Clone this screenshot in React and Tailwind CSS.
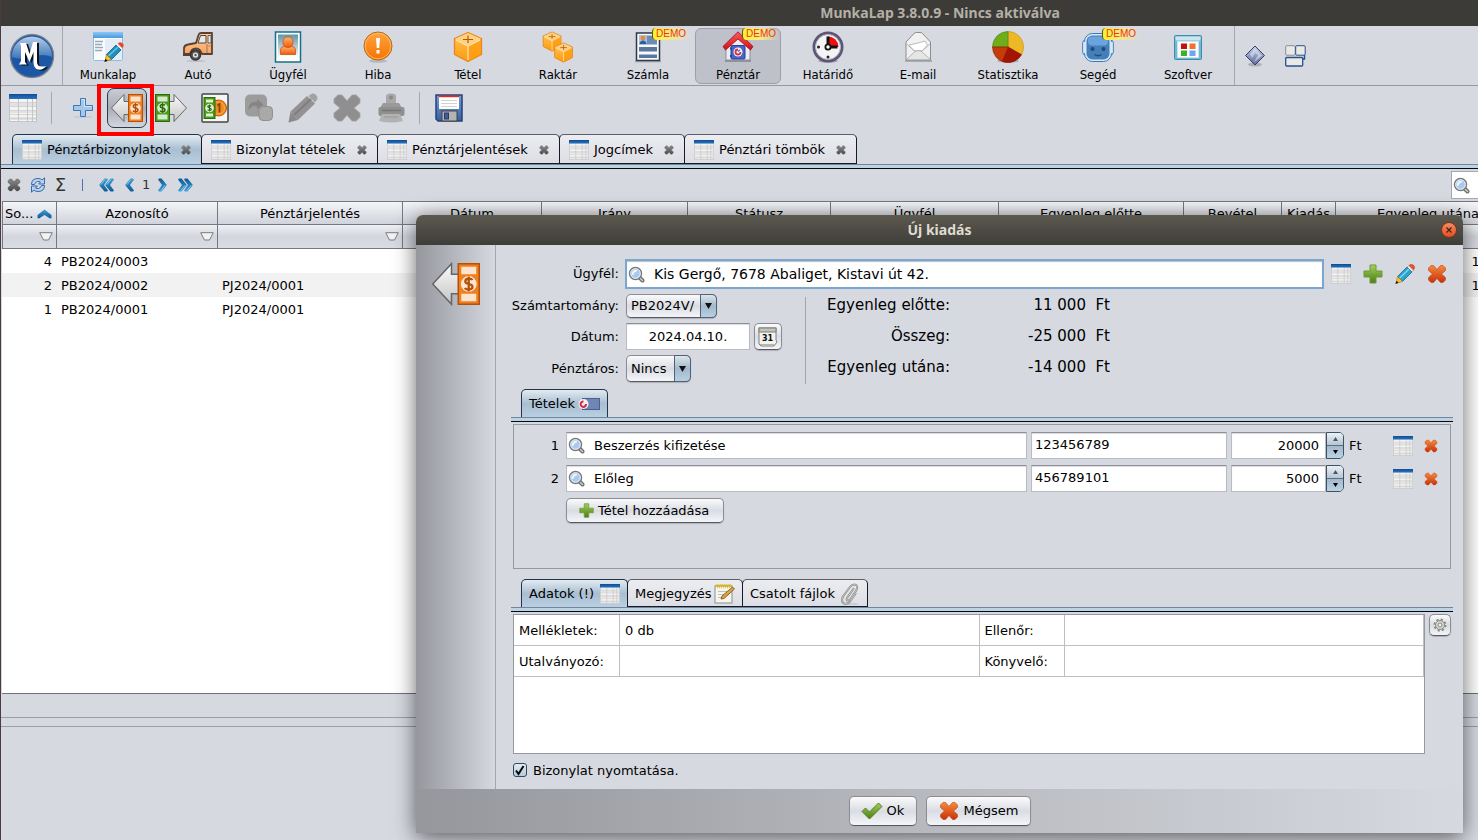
import { useState } from 'react';

// Shared gradients, referenced by id from the icons below
function Gradients() {
  const list = [
    ['gBlue', '#3f9fd8', '#0e5a94'],
    ['gHead', '#0f4d95', '#2a74c0'],
    ['gOrange', '#f58a3c', '#c8310a'],
    ['gGreen', '#a3cf5d', '#4a7d12'],
    ['gGrey', '#8a8a8a', '#4c4c4c'],
    ['gArrow', '#fbfbfb', '#c4c4c4'],
    ['gBox', '#ffc65a', '#ff9a0c'],
    ['gAlert', '#ffa640', '#f57200'],
    ['gLogo', '#b4cbe6', '#3d76ba'],
    ['gSky', '#5d97ad', '#e8f3f6'],
    ['gPerson', '#ffb36b', '#ee5a10'],
    ['gRoof', '#ff5a5a', '#d0101c'],
    ['gDisk', '#6fa0d8', '#3b5f9c'],
    ['gCar', '#ffcf9b', '#f3a263'],
    ['gWin', '#8cc8f4', '#4a98e0'],
    ['gGem', '#c3cde6', '#5d6c9c'],
  ];
  return (
    <svg width="0" height="0" className="absolute" aria-hidden="true">
      <defs>
        {list.map(([id, a, b]) => (
          <linearGradient key={id} id={id} x1="0" y1="0" x2="0" y2="1">
            <stop offset="0" stopColor={a} />
            <stop offset="1" stopColor={b} />
          </linearGradient>
        ))}
      </defs>
    </svg>
  );
}

/* ---------- small icons ---------- */

function TableIcon({ size = 20 }) {
  return (
    <svg width={size} height={size} viewBox="0 0 28 28" className="shrink-0">
      <rect x="0.5" y="0.5" width="27" height="27" fill="#f4f4f4" stroke="#c4c4c4" />
      <rect x="1" y="9" width="26" height="3" fill="#e2e2e2" />
      <rect x="1" y="16" width="26" height="3" fill="#e2e2e2" />
      <rect x="1" y="23" width="26" height="3" fill="#e2e2e2" />
      <path d="M1 8.500H27M1 12.500H27M1 16.500H27M1 20.500H27M1 24.500H27" stroke="#d4d4d4" />
      <path d="M9.500 5V27M18.500 5V27M23.500 5V27" stroke="#c6c6c6" />
      <rect width="28" height="5" fill="url(#gHead)" />
    </svg>
  );
}

function CrossIcon({ size = 20, fill = 'url(#gOrange)', stroke = '#c2410c' }) {
  return (
    <svg width={size} height={size} viewBox="0 0 20 20" className="shrink-0">
      <path
        d="M4 1.500H6.500L10 5.500L13.500 1.500H16L18.500 4V6.500L14.500 10L18.500 13.500V16L16 18.500H13.500L10 14.500L6.500 18.500H4L1.500 16V13.500L5.500 10L1.500 6.500V4Z"
        fill={fill} stroke={stroke} strokeLinejoin="round" strokeOpacity="0.6"
      />
    </svg>
  );
}

function PlusIcon({ size = 20 }) {
  return (
    <svg width={size} height={size} viewBox="0 0 20 20" className="shrink-0">
      <path d="M7 1H13V7H19V13H13V19H7V13H1V7H7Z" fill="url(#gGreen)" stroke="#6c9a35" />
    </svg>
  );
}

function BluePlusIcon() {
  return (
    <svg width="20" height="22" viewBox="0 0 20 22">
      <path d="M1 20H19" stroke="#cacdd5" strokeWidth="2" />
      <path d="M7.500 1.500H12.500V8.500H19.500V13.500H12.500V19.500H7.500V13.500H0.500V8.500H7.500Z" fill="#a4c8ea" stroke="#3f76b5" />
      <path d="M8.500 2.500H11.500V9.500H18.500" fill="none" stroke="#d6e8f8" />
    </svg>
  );
}

function PencilIcon({ size = 20 }) {
  return (
    <svg width={size} height={size} viewBox="0 0 20 20" className="shrink-0">
      <path d="M13.500 2L15.500 0.300Q19.500 0.300 19.700 4L18 6.500Z" fill="#e4572e" stroke="#b53c1a" strokeWidth="0.500" />
      <path d="M12 3.300L13.800 1.800L18.300 6.300L16.700 8Z" fill="#efefef" stroke="#999" strokeWidth="0.500" />
      <path d="M2.500 12.500L12 3L17 8L7.500 17.500Z" fill="#29a3cc" stroke="#14607e" strokeWidth="0.700" />
      <path d="M4.800 14L14 5" stroke="#7fd4ee" strokeWidth="1.500" />
      <path d="M2.500 12.500L7.500 17.500L1 19.500Z" fill="#fbc02d" stroke="#a06a00" strokeWidth="0.500" />
      <path d="M0.300 20L1.500 16.800L3.700 18.700Z" fill="#222" />
    </svg>
  );
}

function SearchIcon() {
  return (
    <svg width="17" height="17" viewBox="0 0 17 17" className="shrink-0">
      <path d="M11.500 11.500L14.500 14.500" stroke="#6e6e6e" strokeWidth="4" strokeLinecap="round" />
      <path d="M12 12L14.500 14.500" stroke="#cfcfcf" strokeWidth="1.500" strokeLinecap="round" />
      <circle cx="7.500" cy="7.500" r="6" fill="#a9caee" stroke="#777" strokeWidth="1.500" />
      <circle cx="7.500" cy="7.500" r="4.800" fill="none" stroke="#eef1f4" />
      <path d="M4.800 8Q5 5 8 4.800" fill="none" stroke="#eef6fd" strokeWidth="2" strokeLinecap="round" />
    </svg>
  );
}

// Banknote with an arrow, orange = money out, green = money in
function CashIcon({ out = true, size = 32 }) {
  const note = out ? '#f07f1c' : '#4b9a1b';
  const dark = out ? '#b4500a' : '#2c6b0a';
  return (
    <svg width={size} height={size} viewBox="0 0 32 32" className="shrink-0">
      {out ? (
        <path d="M0.500 16L13 2.500V9.500H19V22.500H13V29.500Z" fill="url(#gArrow)" stroke="#666" />
      ) : (
        <path d="M31.500 16L19 2.500V9.500H13V22.500H19V29.500Z" fill="url(#gArrow)" stroke="#666" />
      )}
      <g transform={out ? 'translate(17 0)' : 'translate(0 0)'}>
        <rect x="0.500" y="2.500" width="14" height="27" fill={note} stroke={dark} />
        <rect x="2.500" y="4.500" width="10" height="5" fill="#fff" fillOpacity="0.780" />
        <rect x="2.500" y="22.500" width="10" height="5" fill="#fff" fillOpacity="0.780" />
        <circle cx="7.500" cy="16" r="5.300" fill="#fff" fillOpacity="0.800" />
        <path d="M10 13.300Q9.400 12.400 7.500 12.400Q5.200 12.400 5.200 14.200Q5.200 15.600 7.500 16Q10 16.400 10 17.900Q10 19.700 7.500 19.700Q5.500 19.700 5 18.600M7.500 11V21" fill="none" stroke={dark} strokeWidth="1.500" />
      </g>
    </svg>
  );
}

function CashReportIcon() {
  return (
    <svg width="28" height="30" viewBox="0 0 28 30">
      <rect x="1" y="1" width="26" height="28" rx="1" fill="#f5f5f5" stroke="#444" strokeWidth="1.500" />
      <circle cx="17.500" cy="15" r="8" fill="#f08a1c" stroke="#b95a06" />
      <circle cx="17.500" cy="15" r="6" fill="none" stroke="#f9b45e" strokeWidth="0.800" />
      <path d="M16.500 12.500L18.500 11V19.500" fill="none" stroke="#8a4304" strokeWidth="1.800" />
      <rect x="3" y="4.500" width="11" height="21" fill="#4b9a1b" stroke="#2c6b0a" />
      <rect x="5" y="6.500" width="7" height="3" fill="#e0f0d6" />
      <rect x="5" y="20.500" width="7" height="3" fill="#e0f0d6" />
      <circle cx="8.500" cy="15" r="4.300" fill="#e6f4dc" />
      <path d="M10.200 13.300Q8.500 12 7 13Q6.400 14.500 8.500 15Q11 15.600 10 17Q8.500 18 6.600 16.800M8.500 11.500V18.500" fill="none" stroke="#2c6b0a" strokeWidth="1.200" />
    </svg>
  );
}

function GreyCopyIcon() {
  return (
    <svg width="28" height="28" viewBox="0 0 28 28">
      <rect x="0" y="0.500" width="22" height="22" rx="5" fill="#9c9c9c" />
      <path d="M3.500 16V13Q6 6.500 12 8V5L18.500 10.500L12 15V12Q7 10.500 3.500 16Z" fill="#858585" />
      <rect x="14" y="12.500" width="13.500" height="14" rx="4" fill="#a9a9a9" stroke="#8f8f8f" />
    </svg>
  );
}

function GreyPencilIcon() {
  return (
    <svg width="30" height="30" viewBox="0 0 30 30">
      <path d="M20.500 3L24 0.500Q29.500 0.500 29.500 6L27 9.500Z" fill="#a2a2a2" />
      <path d="M2.500 18.500L19 3L27 10.500L10 27Z" fill="#929292" />
      <path d="M6 22L23 6" stroke="#7f7f7f" strokeWidth="2" />
      <path d="M2.500 18.500L10 27L0.500 29.500Z" fill="#8a8a8a" />
    </svg>
  );
}

function GreyPrinterIcon() {
  return (
    <svg width="27" height="30" viewBox="0 0 27 30">
      <path d="M8 12V3Q8 0.500 13 0.500Q18 0.500 18 3V12Z" fill="#a8a8a8" />
      <circle cx="13" cy="4.500" r="2" fill="#8a8a8a" />
      <path d="M5 10H21L24 15H2Z" fill="#9a9a9a" />
      <rect x="0.500" y="14" width="26" height="9" rx="2" fill="#8f8f8f" />
      <path d="M4 17.500H23" stroke="#777" strokeWidth="1.500" />
      <path d="M4 21H22L25 28Q13 31 1 28Z" fill="#b2b2b2" />
      <path d="M6 24H20" stroke="#999" />
    </svg>
  );
}

function FloppyIcon() {
  return (
    <svg width="28" height="28" viewBox="0 0 28 28">
      <path d="M1 1H27V27H3L1 25Z" fill="url(#gDisk)" stroke="#24427c" strokeWidth="1.500" />
      <rect x="4" y="2" width="20" height="13" fill="#fff" />
      <rect x="4" y="1.500" width="20" height="1.700" fill="#dd2a1b" />
      <path d="M6 6.500H22M6 9.500H22M6 12.500H22" stroke="#d2d2d2" />
      <rect x="7" y="17" width="15" height="10" fill="#b4b4b4" stroke="#444" />
      <rect x="9.500" y="19" width="4" height="6" fill="#3d5f9d" stroke="#2a3c60" />
    </svg>
  );
}

function Chevron({ double, flip }) {
  return (
    <svg width={double ? 15 : 10} height="14" viewBox={double ? '0 0 15 14' : '0 0 10 14'} className={flip ? 'rotate-180' : ''}>
      <path d="M5.500 0.500H8L9 1.500L5 7L9 12.500L8 13.500H5.500L0.500 7.500V6.500Z" fill="url(#gBlue)" />
      <path d="M6 1.500L1.800 6.800" fill="none" stroke="#8cc8ec" />
      {double && <path d="M11.500 0.500H14L15 1.500L11 7L15 12.500L14 13.500H11.500L6.500 7.500V6.500Z" fill="url(#gBlue)" />}
      {double && <path d="M12 1.500L7.800 6.800" fill="none" stroke="#8cc8ec" />}
    </svg>
  );
}

function RefreshIcon() {
  return (
    <svg width="16" height="16" viewBox="0 0 16 16">
      <path d="M1.500 7.500Q1.500 1.500 8 1.500Q10.500 1.500 12 3L14.500 0.800V7H8.500L10.500 5Q9 4 7.500 4.500Q5 5 4.500 7.500Z" fill="#b9d4ee" stroke="#3869ad" />
      <path d="M14.500 8.500Q14.500 14.500 8 14.500Q5.500 14.500 4 13L1.500 15.200V9H7.500L5.500 11Q7 12 8.500 11.500Q11 11 11.500 8.500Z" fill="#b9d4ee" stroke="#3869ad" />
    </svg>
  );
}

function FunnelIcon() {
  return (
    <svg width="14" height="9" viewBox="0 0 14 9">
      <path d="M0.700 0.700H13.300L9.500 8H4.500Z" fill="#f1f2f4" stroke="#7c7c7c" />
    </svg>
  );
}

/* ---------- main toolbar icons ---------- */

function WorksheetIcon() {
  return (
    <svg width="32" height="32" viewBox="0 0 32 32">
      <rect x="1.500" y="1.500" width="29" height="28" rx="1" fill="#f9fbfd" stroke="#8cbce8" />
      <rect x="1" y="1" width="30" height="6" fill="url(#gWin)" />
      <rect x="13" y="8" width="17" height="21" fill="#e3edf7" />
      <path d="M3 10.500H11M3 13.500H10M3 16.500H11M3 19.500H10" stroke="#9aa7b5" strokeWidth="1.500" />
      <g transform="translate(12 11)">
        <path d="M13.500 2L15.500 0.300Q19.500 0.300 19.700 4L18 6.500Z" fill="#e4472e" />
        <path d="M12 3.300L13.800 1.800L18.300 6.300L16.700 8Z" fill="#efefef" />
        <path d="M2.500 12.500L12 3L17 8L7.500 17.500Z" fill="#1f8fbd" stroke="#0f506c" strokeWidth="0.700" />
        <path d="M4.500 14L14 5" stroke="#66c7e8" strokeWidth="1.500" />
        <path d="M2.500 12.500L7.500 17.500L1 19.500Z" fill="#fbc02d" stroke="#7d5600" strokeWidth="0.500" />
        <path d="M0.300 20L1.500 16.800L3.700 18.700Z" fill="#111" />
      </g>
    </svg>
  );
}

function CarIcon() {
  return (
    <svg width="32" height="32" viewBox="0 0 32 32">
      <ellipse cx="14" cy="30" rx="10" ry="1.200" fill="#bfc2c9" />
      <path d="M2 24V17Q2.500 14 6 13.500L14 12L16.500 4Q17 2 19 2H30V23H20Q18 17.500 14 17.500Q9 17.500 8 24Z" fill="url(#gCar)" stroke="#5b4034" strokeWidth="1.800" strokeLinejoin="round" />
      <path d="M1 23.500H8" stroke="#5b4034" strokeWidth="3" />
      <path d="M16 12L18.500 4.500H24V12Z" fill="#dfeaf0" stroke="#5b4034" />
      <path d="M26 4.500H29V12H26Z" fill="#dfeaf0" stroke="#5b4034" strokeWidth="0.800" />
      <path d="M25 13V22M26.500 15H28.500" stroke="#a8714a" />
      <circle cx="13.500" cy="24" r="5" fill="#555" stroke="#3a3230" strokeWidth="1.500" />
      <circle cx="13.500" cy="24" r="2.600" fill="#e9e9e9" />
      <circle cx="13.500" cy="24" r="1.200" fill="#555" />
    </svg>
  );
}

function ClientIcon() {
  return (
    <svg width="32" height="32" viewBox="0 0 32 32">
      <rect x="3.500" y="1" width="25" height="30" fill="#fff" stroke="#157089" strokeWidth="1.500" />
      <rect x="6" y="3.500" width="20" height="21" fill="url(#gSky)" />
      <path d="M8.500 23.500V19Q8.500 15.500 12 15.500H20Q23.500 15.500 23.500 19V23.500Z" fill="url(#gPerson)" stroke="#cf5412" strokeWidth="0.800" />
      <rect x="11" y="6" width="10" height="10.500" rx="4.500" fill="url(#gPerson)" stroke="#cf5412" strokeWidth="0.800" />
    </svg>
  );
}

function AlertIcon() {
  return (
    <svg width="32" height="32" viewBox="0 0 32 32">
      <ellipse cx="16" cy="30" rx="9" ry="1.700" fill="#b5b8bf" />
      <circle cx="16" cy="15" r="14" fill="url(#gAlert)" stroke="#b46b12" />
      <circle cx="16" cy="15" r="12.800" fill="none" stroke="#ffbf72" strokeWidth="0.800" />
      <path d="M14 7H18L17.200 17H14.800Z" fill="#fff" />
      <rect x="14.500" y="19" width="3" height="3.500" fill="#fff" />
    </svg>
  );
}

function Box({ x = 0, y = 0, s = 1 }) {
  return (
    <g transform={`translate(${x} ${y}) scale(${s})`}>
      <path d="M16 1.500L29.500 7.500V23.500L16 30.500L2.500 23.500V7.500Z" fill="url(#gBox)" stroke="#e8861b" strokeWidth="1.300" strokeLinejoin="round" />
      <path d="M16 2.200L28.800 7.800L16 14.500L3.200 7.800Z" fill="#ffd183" />
      <path d="M16 14.500L29 8V23.200L16 30Z" fill="#ff9c10" fillOpacity="0.750" />
      <path d="M4 8.800L16 15L28 8.800M16 15V29" fill="none" stroke="#ffe3ab" strokeWidth="1.300" />
      <path d="M16 4.500V12M11 8.500H21" stroke="#b4570b" strokeWidth="1.200" />
    </g>
  );
}

function ItemIcon() {
  return <svg width="32" height="32" viewBox="0 0 32 32"><Box /></svg>;
}

function StockIcon() {
  return (
    <svg width="32" height="32" viewBox="0 0 32 32">
      <Box x={-0.5} y={0} s={0.66} />
      <Box x={11} y={11} s={0.66} />
    </svg>
  );
}

function InvoiceIcon() {
  return (
    <svg width="32" height="32" viewBox="0 0 32 32">
      <path d="M3 30.500H29" stroke="#b0b3ba" strokeWidth="2" />
      <rect x="4.500" y="2" width="23" height="27.500" fill="#f7f9fb" stroke="#2f3847" strokeWidth="1.500" />
      <rect x="7" y="4.500" width="18" height="9" fill="#6d8bb5" />
      <rect x="7" y="4.500" width="8" height="9" fill="#a9c0dd" />
      <circle cx="11" cy="7" r="2.300" fill="#e98a2f" />
      <path d="M7.500 13Q8 9.500 11 9.500Q14 9.500 14.500 13Z" fill="#2b5fa5" />
      <rect x="7" y="16" width="18" height="4.500" fill="#5a789f" />
      <rect x="7" y="23.500" width="18" height="3.500" fill="#5a789f" />
    </svg>
  );
}

function SafeHouseIcon() {
  return (
    <svg width="32" height="32" viewBox="0 0 32 32">
      <path d="M3 30H29" stroke="#8f929a" strokeWidth="2" />
      <path d="M4 14L16 3L28 14V29H4Z" fill="#eceef1" stroke="#8d8f95" />
      <rect x="9" y="14.500" width="14" height="13.500" rx="1" fill="#4a63c8" stroke="#2a3f97" />
      <path d="M8 17.500H10M8 25H10" stroke="#2a3f97" strokeWidth="2" />
      <circle cx="16" cy="21" r="4.500" fill="#f3f3f8" />
      <path d="M16 18.500A2.500 2.500 0 1 0 18.500 21" fill="none" stroke="#d3323f" strokeWidth="1.800" />
      <path d="M16 20.500L18 19" stroke="#4a63c8" strokeWidth="1.500" />
      <path d="M16 0.800L31 15.500L28.500 19L16 8L3.500 19L1 15.500Z" fill="url(#gRoof)" stroke="#a30d16" strokeWidth="0.800" strokeLinejoin="round" />
    </svg>
  );
}

function ClockIcon() {
  return (
    <svg width="32" height="32" viewBox="0 0 32 32">
      <ellipse cx="16" cy="30" rx="10" ry="1.800" fill="#a9acb3" />
      <circle cx="16" cy="16" r="14" fill="#f4f4f4" stroke="#5c5775" strokeWidth="3" />
      <circle cx="16" cy="16" r="12.500" fill="none" stroke="#b5b2c5" />
      <path d="M16 16V5.500A10.500 10.500 0 0 1 26.500 16Z" fill="#f20d0d" />
      <path d="M16 16V5.500M16 16H25.500" stroke="#111" strokeWidth="3" />
      <circle cx="16" cy="16" r="2.600" fill="#fff" stroke="#111" strokeWidth="1.800" />
      <circle cx="6.500" cy="16" r="1.500" fill="#222" />
      <circle cx="16" cy="26" r="1.500" fill="#222" />
    </svg>
  );
}

function MailIcon() {
  return (
    <svg width="32" height="32" viewBox="0 0 32 32">
      <path d="M3 30H30" stroke="#a9acb3" strokeWidth="2" />
      <path d="M4 11L12 2.500Q13 1.500 14.500 1.500H18Q19.500 1.500 20.500 2.500L28.500 11V29H4Z" fill="#f1f1f1" stroke="#8c8c8c" />
      <path d="M7 14Q15 12.500 23 10L25.500 14L20 20H12Z" fill="#fff" stroke="#bdbdbd" />
      <path d="M4.500 13L12.500 20H20L28 13" fill="none" stroke="#b5b5b5" />
      <path d="M5 28L13 20.500Q16 18.500 19.500 20.500L28 28" fill="#e6e6e6" stroke="#b5b5b5" />
    </svg>
  );
}

function StatsIcon() {
  return (
    <svg width="32" height="32" viewBox="0 0 32 32">
      <ellipse cx="16" cy="30" rx="11" ry="1.800" fill="#b0b3ba" />
      <path d="M16 16V0.500A15.500 15.500 0 0 1 29.500 23.700Z" fill="#ecb826" stroke="#c38f10" strokeWidth="0.600" />
      <path d="M16 16H0.500A15.500 15.500 0 0 1 16 0.500Z" fill="#6fae1a" stroke="#47800c" strokeWidth="0.600" />
      <path d="M16 16L29.500 23.700A15.500 15.500 0 0 1 0.500 16Z" fill="#c63c08" stroke="#8a1503" strokeWidth="0.600" />
      <path d="M16 16L29.500 23.700A15.500 15.500 0 0 1 10 30.300Z" fill="#980a05" fillOpacity="0.800" />
    </svg>
  );
}

function RobotIcon() {
  return (
    <svg width="32" height="32" viewBox="0 0 32 32">
      <rect x="0.700" y="9" width="30.600" height="15" rx="3" fill="#d5e8fa" stroke="#3d79b4" />
      <rect x="2.500" y="2.500" width="27" height="28" rx="8" fill="#d5e8fa" stroke="#3d79b4" />
      <rect x="1.500" y="11" width="29" height="11" fill="#d5e8fa" />
      <rect x="4.500" y="4.500" width="23" height="24" rx="6" fill="#447fb9" />
      <rect x="6" y="5.500" width="20" height="9" rx="4" fill="#6ba4dc" />
      <circle cx="10.500" cy="18" r="2" fill="#1e4a7c" />
      <circle cx="21.500" cy="18" r="2" fill="#1e4a7c" />
      <path d="M12.500 23.500Q16 26 19.500 23.500" fill="none" stroke="#1e4a7c" strokeWidth="1.500" />
    </svg>
  );
}

function SoftwareIcon() {
  return (
    <svg width="32" height="32" viewBox="0 0 32 32">
      <rect x="2.500" y="4.500" width="27" height="24" rx="1" fill="#72b8d3" stroke="#3b8cab" />
      <rect x="3.500" y="5.500" width="25" height="4" fill="#c9e5ef" />
      <rect x="5.500" y="10.500" width="21" height="16" fill="#fbfbfb" stroke="#cfe3ea" />
      <rect x="9" y="12.500" width="6" height="5.500" fill="#c80d0d" />
      <rect x="17.500" y="12.500" width="6" height="5.500" fill="#f2702b" />
      <rect x="9" y="19.500" width="6" height="5.500" fill="#3db028" />
      <rect x="17.500" y="19.500" width="6" height="5.500" fill="#6aa6f5" />
    </svg>
  );
}

function LogoIcon() {
  return (
    <svg width="46" height="46" viewBox="0 0 46 46">
      <circle cx="23" cy="23" r="21.500" fill="#1c57a5" stroke="#7d8794" strokeWidth="1.500" />
      <path d="M2.500 24A20.500 20.500 0 0 1 43.500 24Q33 20 23 24Q12 27 2.500 24Z" fill="url(#gLogo)" />
      <circle cx="23" cy="23" r="20.500" fill="none" stroke="#2a5a9a" strokeWidth="0.800" />
      <path d="M11 10H17L20.500 21L24 9H28V29Q28 35 37 33Q33 38.500 27.500 36Q24.500 34 24.500 29V19L20.500 29L16 19V29L18 31.500H10L12 28V13Z" fill="#111" transform="translate(2 1)" />
      <path d="M11 10H17L20.500 21L24 9H28V29Q28 35 37 33Q33 38.500 27.500 36Q24.500 34 24.500 29V19L20.500 29L16 19V29L18 31.500H10L12 28V13Z" fill="#fff" />
    </svg>
  );
}

const menuItems = [
  { label: 'Munkalap', icon: <WorksheetIcon /> },
  { label: 'Autó', icon: <CarIcon /> },
  { label: 'Ügyfél', icon: <ClientIcon /> },
  { label: 'Hiba', icon: <AlertIcon /> },
  { label: 'Tétel', icon: <ItemIcon /> },
  { label: 'Raktár', icon: <StockIcon /> },
  { label: 'Számla', icon: <InvoiceIcon />, demo: true },
  { label: 'Pénztár', icon: <SafeHouseIcon />, demo: true, active: true },
  { label: 'Határidő', icon: <ClockIcon /> },
  { label: 'E-mail', icon: <MailIcon /> },
  { label: 'Statisztika', icon: <StatsIcon /> },
  { label: 'Segéd', icon: <RobotIcon />, demo: true },
  { label: 'Szoftver', icon: <SoftwareIcon /> },
];

const pageTabs = [
  { label: 'Pénztárbizonylatok', width: 'w-[190px]' },
  { label: 'Bizonylat tételek', width: 'w-[177px]' },
  { label: 'Pénztárjelentések', width: 'w-[183px]' },
  { label: 'Jogcímek', width: 'w-[126px]' },
  { label: 'Pénztári tömbök', width: 'w-[173px]' },
];

const columns = [
  { label: 'So...', width: 'w-[55px]' },
  { label: 'Azonosító', width: 'w-[161px]' },
  { label: 'Pénztárjelentés', width: 'w-[185px]' },
  { label: 'Dátum', width: 'w-[139px]' },
  { label: 'Irány', width: 'w-[146px]' },
  { label: 'Státusz', width: 'w-[143px]' },
  { label: 'Ügyfél', width: 'w-[168px]' },
  { label: 'Egyenleg előtte', width: 'w-[185px]' },
  { label: 'Bevétel', width: 'w-[98px]' },
  { label: 'Kiadás', width: 'w-[54px]' },
  { label: 'Egyenleg utána', width: 'w-[185px]' },
];

const vouchers = [
  { no: 4, code: 'PB2024/0003', report: '', after: '11 000' },
  { no: 2, code: 'PB2024/0002', report: 'PJ2024/0001', after: '11 000' },
  { no: 1, code: 'PB2024/0001', report: 'PJ2024/0001', after: '' },
];

const items = [
  { name: 'Beszerzés kifizetése', ref: '123456789', amount: '20000' },
  { name: 'Előleg', ref: '456789101', amount: '5000' },
];

const raised = 'rounded-[5px] border border-[#8a8d94] border-b-[#55585f] bg-linear-to-b from-[#fbfbfc] via-[#d9dce2] to-[#f4f5f9] shadow-[0_1px_1px_#aeb1b8]';
const field = 'border border-[#b9bcc2] border-t-[#8d9096] bg-white shadow-[inset_0_1px_1px_#d9dbe0] outline-none';
const tabOn = 'border-[#22344a] border-b-0 bg-linear-to-b from-[#e3ebf1] via-[#a9bfd1] to-[#b9d0e2]';
const tabOff = 'border-[#5b5e66] border-x-[#141a26] border-b-[#141a26] bg-linear-to-b from-[#ecedf1] to-[#dcdee5] pt-[2px]';

function TabStrip() {
  return <div className="h-[5px] border-t border-b border-t-[#74849a] border-b-[#05070f] bg-[#bcd3e4]" />;
}

function MainToolbar() {
  return (
    <nav className="flex h-[60px] border-b border-[#95989f]">
      <a href="#home" aria-label="Kezdőlap" className="flex w-[62px] shrink-0 items-center justify-center border-r border-[#a5a8af]">
        <LogoIcon />
      </a>
      <div className="flex border-r border-[#a5a8af] pr-px">
        {menuItems.map((m) => (
          <div key={m.label} className="w-[90px] shrink-0 px-[2px] py-[2px] font-['DejaVu_Sans_Condensed','DejaVu_Sans',sans-serif]">
            <button
              className={`relative flex h-[56px] w-full flex-col items-center rounded-[6px] border pt-[2px] text-[13px] leading-[20px] ${
                m.active ? 'border-[#9c9fa6] bg-[#bec1c9]' : 'border-transparent'
              }`}
            >
              <span className="h-[34px] shrink-0">{m.icon}</span>
              <span className="shrink-0">{m.label}</span>
              {m.demo && (
                <span className="absolute -top-px left-[46px] rounded-[4px] border-l border-[#55553a] bg-linear-to-r from-[#fff200] via-[#f3eb86] to-transparent px-[3px] font-['Liberation_Sans',sans-serif] text-[10px] leading-[12px] text-[#f4310f]">
                  DEMO
                </span>
              )}
            </button>
          </div>
        ))}
      </div>
      <div className="flex items-center gap-[20px] pl-[10px]">
        <button aria-label="Súgó">
          <svg width="20" height="22" viewBox="0 0 20 22">
            <ellipse cx="10" cy="19.500" rx="7" ry="2" fill="#aeb1b9" />
            <path d="M10 1L19.500 10.500L10 20L0.500 10.500Z" fill="url(#gGem)" stroke="#35426b" />
            <path d="M10 3L5 9L7 13L10 8L13 10L9 17L13 14L17 10.500Z" fill="#dde4f2" fillOpacity="0.600" />
          </svg>
        </button>
        <button aria-label="Ablakok">
          <svg width="21" height="22" viewBox="0 0 21 22">
            <rect x="0.700" y="0.700" width="9.500" height="9.500" rx="1" fill="#e9e9e6" stroke="#8d8d8d" />
            <rect x="10.700" y="0.700" width="9.500" height="9.500" rx="1" fill="#e9e9e6" stroke="#27508c" />
            <path d="M19.500 10V14H18" fill="none" stroke="#27508c" strokeWidth="1.500" />
            <rect x="0.700" y="12.500" width="17" height="8.500" rx="1" fill="#e9e9e6" stroke="#27508c" strokeWidth="1.300" />
          </svg>
        </button>
      </div>
    </nav>
  );
}

function ActionToolbar() {
  const tools = [
    { label: 'Új', icon: <BluePlusIcon /> },
    { label: 'Új kiadás', icon: <CashIcon />, marked: true },
    { label: 'Új bevétel', icon: <CashIcon out={false} /> },
    { label: 'Pénztárjelentés', icon: <CashReportIcon /> },
    { label: 'Másolás', icon: <GreyCopyIcon /> },
    { label: 'Szerkesztés', icon: <GreyPencilIcon /> },
    { label: 'Törlés', icon: <CrossIcon size={30} fill="#8f8f8f" stroke="#8f8f8f" /> },
    { label: 'Nyomtatás', icon: <GreyPrinterIcon /> },
  ];
  return (
    <div className="flex h-[48px] items-center pb-[4px] pl-[8px]">
      <button aria-label="Táblázat"><TableIcon size={28} /></button>
      <div className="ml-[14px] h-[32px] w-px bg-[#a5a8af]" />
      <div className="ml-[9px] flex">
        {tools.map((t) => (
          <div key={t.label} className="relative flex w-[44px] justify-center">
            <button
              aria-label={t.label}
              className={`flex h-[40px] w-[40px] items-center justify-center ${
                t.marked ? 'rounded-[7px] border border-[#2c3950] bg-linear-to-b from-[#c9ccd4] via-[#a9adb8] to-[#d3d6de]' : ''
              }`}
            >
              {t.icon}
            </button>
            {t.marked && <span className="pointer-events-none absolute -top-[4px] -left-[8px] z-10 h-[52px] w-[57px] border-4 border-[#ff0000]" />}
          </div>
        ))}
      </div>
      <div className="ml-[6px] h-[32px] w-px bg-[#a5a8af]" />
      <button aria-label="Mentés" className="ml-[15px]"><FloppyIcon /></button>
    </div>
  );
}

function VoucherTable() {
  return (
    <div className="ml-px flex-1 overflow-hidden border-b border-[#6f727a] bg-white">
      <table className="w-[1519px] table-fixed border-separate border-spacing-0 text-[13px]">
        <thead>
          <tr>
            {columns.map((c, i) => (
              <th
                key={c.label}
                className={`h-[24px] border-t border-r border-b border-[#75787f] bg-linear-to-b from-[#f4f5f8] to-[#d0d3db] p-0 pt-px font-normal whitespace-nowrap first:border-l ${c.width}`}
              >
                {i === 0 ? (
                  <span className="flex items-center justify-between pr-[4px] pl-[2px]">
                    {c.label}
                    <svg width="15" height="10" viewBox="0 0 15 10">
                      <path d="M7.500 0.500L14.500 6V9L13 9.500L7.500 6L2 9.500L0.500 9V6Z" fill="url(#gBlue)" />
                    </svg>
                  </span>
                ) : c.label}
              </th>
            ))}
          </tr>
          <tr>
            {columns.map((c) => (
              <td key={c.label} className="h-[24px] border-r border-b border-[#75787f] bg-linear-to-b from-[#eff0f4] via-[#d3d6dd] to-[#d9dce3] p-0 first:border-l">
                <button aria-label={`Szűrés: ${c.label}`} className="flex w-full justify-end pr-[3px]"><FunnelIcon /></button>
              </td>
            ))}
          </tr>
        </thead>
        <tbody>
          {vouchers.map((v) => (
            <tr key={v.no} className="h-[24px] even:bg-[#f2f2f2]">
              <td className="p-0 pt-[2px] pr-[5px] text-right">{v.no}</td>
              <td className="p-0 pt-[2px] pl-[4px]">{v.code}</td>
              <td className="p-0 pt-[2px] pl-[4px]">{v.report}</td>
              <td colSpan={7} />
              <td className="p-0 pt-[2px] pr-[4px] text-right">{v.after}</td>
            </tr>
          ))}
        </tbody>
      </table>
    </div>
  );
}

function Select({ id, value, className }) {
  return (
    <span className={`grid ${className}`}>
      <select id={id} defaultValue={value} className={`${raised} w-full appearance-none pl-[4px] text-[13px] outline-none [grid-area:1/1]`}>
        <option>{value}</option>
      </select>
      <span className="pointer-events-none flex w-[17px] items-center justify-center justify-self-end rounded-r-[5px] border border-[#4f6279] bg-linear-to-b from-[#dbe5ec] via-[#a3b9cb] to-[#b9d0e2] [grid-area:1/1]">
        <svg width="7" height="6" viewBox="0 0 7 6"><path d="M0 0H7L3.500 6Z" fill="#111" /></svg>
      </span>
    </span>
  );
}

function ItemRow({ index, item }) {
  return (
    <div className="flex h-[27px] items-center">
      <span className="w-[45px] text-right">{index}</span>
      <label className={`${field} ml-[7px] flex h-full flex-1 items-center pl-px`}>
        <SearchIcon />
        <input aria-label={`Tétel ${index}`} defaultValue={item.name} className="ml-[9px] w-full outline-none" />
      </label>
      <input aria-label={`Hivatkozás ${index}`} defaultValue={item.ref} className={`${field} ml-[4px] h-full w-[196px] pb-[2px] pl-[3px]`} />
      <input aria-label={`Összeg ${index}`} inputMode="numeric" defaultValue={item.amount} className={`${field} ml-[4px] h-full w-[95px] pr-[6px] text-right`} />
      <div className="flex h-full w-[18px] flex-col overflow-hidden rounded-r-[5px] border border-[#3c5068]">
        <button aria-label="Növelés" className="flex flex-1 items-center justify-center border-b border-[#5a7088] bg-linear-to-b from-[#eaf0f4] to-[#b6c6d3]">
          <svg width="5" height="4" viewBox="0 0 5 4"><path d="M0 4H5L2.500 0Z" fill="#555" /></svg>
        </button>
        <button aria-label="Csökkentés" className="flex flex-1 items-center justify-center bg-linear-to-b from-[#a3b9cb] to-[#bcd3e4]">
          <svg width="5" height="4" viewBox="0 0 5 4"><path d="M0 0H5L2.500 4Z" fill="#000" /></svg>
        </button>
      </div>
      <span className="ml-[5px] w-[44px]">Ft</span>
      <button aria-label="Lista"><TableIcon /></button>
      <button aria-label="Tétel törlése" className="mr-[12px] ml-[11px]"><CrossIcon size={14} /></button>
    </div>
  );
}

function DialogTab({ active, width, children }) {
  return (
    <button className={`-ml-px flex h-[28px] items-center justify-between rounded-t-[5px] border px-[7px] first:ml-0 ${width} ${active ? tabOn : tabOff}`}>
      {children}
    </button>
  );
}

function ExpenseDialog() {
  const [print, setPrint] = useState(true);

  const balances = [
    ['Egyenleg előtte:', '11 000\u00a0 Ft'],
    ['Összeg:', '-25 000\u00a0 Ft'],
    ['Egyenleg utána:', '-14 000\u00a0 Ft'],
  ];

  return (
    <section
      role="dialog"
      aria-labelledby="dialog-title"
      className="absolute top-[215px] right-[15px] left-[415px] z-20 rounded-t-[7px] bg-[#d6d9e0] shadow-[0_4px_22px_rgba(0,0,0,0.600)]"
    >
      <header className="flex h-[30px] items-center rounded-t-[7px] bg-linear-to-b from-[#5c594f] to-[#3e3d38] pr-[6px] pl-[22px]">
        <h2 id="dialog-title" className="flex-1 text-center font-['Noto_Sans',sans-serif] text-[14px] font-bold text-[#dfdbd2]">Új kiadás</h2>
        <button aria-label="Bezárás" className="flex h-[16px] w-[16px] items-center justify-center rounded-full border border-[#7d3517] bg-linear-to-b from-[#f58a62] to-[#e04d1c]">
          <svg width="6" height="6" viewBox="0 0 6 6"><path d="M0.500 0.500L5.500 5.500M5.500 0.500L0.500 5.500" stroke="#4a1d0c" strokeWidth="1.200" /></svg>
        </button>
      </header>

      <div className="flex">
        <aside className="w-[80px] shrink-0 border-r border-[#a3a6ae] bg-linear-to-r from-[#95979d] to-[#d6d9e0] pt-[15px] pl-[16px]">
          <CashIcon size={48} />
        </aside>

        <div className="min-w-0 flex-1 pt-[14px] pr-[10px] pb-[12px] pl-[15px]">
          <div className="flex h-[30px] items-center pr-[6px]">
            <label htmlFor="client" className="mr-[6px] w-[108px] shrink-0 text-right">Ügyfél:</label>
            <span className="flex h-[30px] flex-1 items-center border-2 border-[#7ba6cf] bg-white pl-px shadow-[inset_0_1px_1px_#b9bcc2]">
              <SearchIcon />
              <input id="client" defaultValue="Kis Gergő, 7678 Abaliget, Kistavi út 42." className="ml-[9px] w-full text-[14px] outline-none" />
            </span>
            <div className="ml-[7px] flex gap-[12px]">
              <button aria-label="Lista"><TableIcon /></button>
              <button aria-label="Új ügyfél"><PlusIcon /></button>
              <button aria-label="Szerkesztés"><PencilIcon /></button>
              <button aria-label="Törlés"><CrossIcon /></button>
            </div>
          </div>

          <div className="flex h-[100px]">
            <div className="flex w-[271px] flex-col gap-[5px] pt-[5px]">
              <div className="flex items-center">
                <label htmlFor="range" className="mr-[7px] w-[108px] text-right">Számtartomány:</label>
                <Select id="range" value="PB2024V/" className="h-[24px] w-[91px]" />
              </div>
              <div className="flex items-center">
                <label htmlFor="date" className="mr-[7px] w-[108px] text-right">Dátum:</label>
                <input id="date" defaultValue="2024.04.10." className={`${field} h-[27px] w-[124px] pb-px text-center`} />
                <button aria-label="Naptár" className={`${raised} ml-[4px] flex h-[27px] w-[28px] items-center justify-center`}>
                  <svg width="20" height="20" viewBox="0 0 20 20">
                    <path d="M1 1H18V13L19 15L16 19H3L1 17Z" fill="#f2f2ee" stroke="#7f7f78" />
                    <rect x="1" y="1" width="17" height="4" fill="#c3c3bd" stroke="#7f7f78" />
                    <path d="M2 17.500H16" stroke="#b5b5ae" />
                    <text x="9.500" y="14" textAnchor="middle" fontSize="8" fontWeight="bold" fontFamily="DejaVu Sans" fill="#111">31</text>
                  </svg>
                </button>
              </div>
              <div className="flex items-center">
                <label htmlFor="cashier" className="mr-[7px] w-[108px] text-right">Pénztáros:</label>
                <Select id="cashier" value="Nincs" className="h-[27px] w-[65px]" />
              </div>
            </div>
            <dl className="mt-[8px] ml-[23px] grid h-[87px] auto-rows-[31px] grid-cols-[144px_160px] border-l border-[#a3a6ae] text-right text-[15px] leading-[31px]">
              {balances.map(([name, value]) => (
                <div key={name} className="contents">
                  <dt className="-mt-[7px]">{name}</dt>
                  <dd className="-mt-[7px]">{value}</dd>
                </div>
              ))}
            </dl>
          </div>

          <div className="flex pl-[10px]">
            <DialogTab active width="w-[87px]">
              Tételek
              <svg width="22" height="14" viewBox="0 0 22 14">
                <rect x="4.500" y="1.500" width="17" height="11" fill="#6f87b5" stroke="#4d5f8e" />
                <circle cx="5.500" cy="7" r="5" fill="#f5eef2" />
                <path d="M5.500 4.500A2.700 2.700 0 1 0 8 7" fill="none" stroke="#cf2c3c" strokeWidth="2" />
              </svg>
            </DialogTab>
          </div>
          <TabStrip />
          <div className="mx-[2px] mt-[2px] flex h-[145px] flex-col gap-[6px] border border-[#9599a2] pt-[7px]">
            {items.map((item, i) => <ItemRow key={item.ref} index={i + 1} item={item} />)}
            <button className={`${raised} ml-[52px] flex h-[25px] w-[158px] items-center pl-[12px]`}>
              <PlusIcon size={15} />
              <span className="ml-[4px]">Tétel hozzáadása</span>
            </button>
          </div>

          <div className="mt-[10px] flex pl-[10px]">
            <DialogTab active width="w-[107px]">
              Adatok (!)
              <TableIcon />
            </DialogTab>
            <DialogTab width="w-[116px]">
              Megjegyzés
              <svg width="22" height="22" viewBox="0 0 22 22">
                <rect x="2" y="3" width="17" height="17" fill="#f6f5ee" stroke="#8d8d88" />
                <path d="M5 8.500H15M5 11.500H13M5 14.500H12" stroke="#c0c0ba" />
                <path d="M2.500 3.500Q3.500 0 4.500 3.500Q5.500 0 6.500 3.500Q7.500 0 8.500 3.500Q9.500 0 10.500 3.500Q11.500 0 12.500 3.500Q13.500 0 14.500 3.500Q15.500 0 16.500 3.500Q17.500 0 18.500 3.500" fill="none" stroke="#d8b416" strokeWidth="1.200" />
                <path d="M8 16L9 13L19.500 4L21.500 6L11 15.500Z" fill="#d9a441" stroke="#70501a" strokeWidth="0.800" />
              </svg>
            </DialogTab>
            <DialogTab width="w-[126px]">
              Csatolt fájlok
              <svg width="20" height="22" viewBox="0 0 20 22">
                <path d="M5 21H18" stroke="#c6c8ce" strokeWidth="1.500" />
                <path d="M14 5L7 15Q6 17.500 8 17.500Q9.500 17.500 10.500 16L16.500 7Q18.500 2 14.500 1.500Q12 1.500 10 4L3 13.500Q0.500 18.500 4 20.500Q7.500 21.500 10 18.500L16 10" fill="none" stroke="#8a8a86" strokeWidth="2" />
                <path d="M14 5L7 15Q6 17.500 8 17.500Q9.500 17.500 10.500 16L16.500 7Q18.500 2 14.500 1.500Q12 1.500 10 4L3 13.500Q0.500 18.500 4 20.500Q7.500 21.500 10 18.500L16 10" fill="none" stroke="#d8d8d4" strokeWidth="0.700" />
              </svg>
            </DialogTab>
          </div>
          <TabStrip />
          <div className="mx-[2px] mt-[2px] flex items-start gap-[4px]">
            <div className="h-[140px] flex-1 border border-[#9599a2] bg-white">
              <table className="w-full table-fixed border-separate border-spacing-0 text-left">
                <tbody>
                  {[['Mellékletek:', '0 db', 'Ellenőr:', ''], ['Utalványozó:', '', 'Könyvelő:', '']].map((r) => (
                    <tr key={r[0]} className="h-[31px]">
                      <th className="w-[106px] border-r border-b border-[#bfbfbf] p-0 pt-[2px] pl-[5px] font-normal">{r[0]}</th>
                      <td className="border-r border-b border-[#bfbfbf] p-0 pt-[2px] pl-[5px]">{r[1]}</td>
                      <th className="w-[85px] border-r border-b border-[#bfbfbf] p-0 pt-[2px] pl-[5px] font-normal">{r[2]}</th>
                      <td className="border-r border-b border-[#bfbfbf] p-0 pt-[2px] pl-[5px]">{r[3]}</td>
                    </tr>
                  ))}
                </tbody>
              </table>
            </div>
            <button aria-label="Beállítások" className={`${raised} flex h-[22px] w-[22px] items-center justify-center`}>
              <svg width="14" height="14" viewBox="0 0 14 14">
                <circle cx="7" cy="7" r="5.500" fill="none" stroke="#8b8b85" strokeWidth="2" strokeDasharray="2.200 2.120" />
                <circle cx="7" cy="7" r="4.500" fill="#d6d6d0" stroke="#8b8b85" />
                <circle cx="7" cy="7" r="2" fill="#eee" stroke="#8b8b85" />
              </svg>
            </button>
          </div>

          <div className="mt-[9px] ml-[2px] flex h-[14px] items-center">
            <span className="grid h-[14px] w-[14px] place-items-center">
              <input
                id="print" type="checkbox" checked={print} onChange={(e) => setPrint(e.target.checked)}
                className="h-[14px] w-[14px] appearance-none rounded-[3px] border border-[#33475e] bg-linear-to-b from-[#e4ecf2] to-[#b3cadc] [grid-area:1/1]"
              />
              {print && (
                <svg width="10" height="11" viewBox="0 0 10 11" className="pointer-events-none [grid-area:1/1]">
                  <path d="M1 5.500L3.500 9L8.500 1" fill="none" stroke="#0a0a0a" strokeWidth="2" />
                </svg>
              )}
            </span>
            <label htmlFor="print" className="ml-[6px] pt-[2px]">Bizonylat nyomtatása.</label>
          </div>
        </div>
      </div>

      <footer className="flex h-[44px] items-center justify-center gap-[9px] bg-linear-to-r from-[#95979d] via-[#b8babf] to-[#d6d9e0]">
        <button className={`${raised} flex h-[30px] w-[68px] items-center pl-[11px]`}>
          <svg width="22" height="18" viewBox="0 0 22 18">
            <path d="M1 9.500L4.500 6L8.500 10L17.500 1L21 4.500L8.500 17Z" fill="url(#gGreen)" stroke="#557f22" strokeLinejoin="round" />
          </svg>
          <span className="ml-[4px]">Ok</span>
        </button>
        <button className={`${raised} flex h-[30px] w-[105px] items-center pl-[12px]`}>
          <CrossIcon />
          <span className="ml-[5px]">Mégsem</span>
        </button>
      </footer>
    </section>
  );
}

export default function App() {
  const [activeTab, setActiveTab] = useState(0);

  return (
    <div className="relative flex min-h-screen flex-col overflow-hidden border-l border-[#4b3b41] bg-[#d6d9e0] font-['DejaVu_Sans',sans-serif] text-[13px] leading-[16px] text-black">
      <Gradients />

      {/* Window title */}
      <header className="flex h-[26px] items-center justify-center bg-[#3c3b37] pl-[401px]">
        <h1 className="font-['Noto_Sans',sans-serif] text-[14px] font-bold text-[#b3b0a8]">MunkaLap 3.8.0.9 - Nincs aktiválva</h1>
      </header>

      <MainToolbar />
      <ActionToolbar />

      {/* Open pages */}
      <div className="flex pl-[11px]">
        {pageTabs.map((tab, i) => (
          <div
            key={tab.label}
            className={`-ml-px flex h-[30px] items-center justify-between rounded-t-[5px] border pr-[10px] pl-[9px] first:ml-0 ${tab.width} ${i === activeTab ? tabOn : tabOff}`}
          >
            <button onClick={() => setActiveTab(i)} className="flex items-center gap-[5px]">
              <TableIcon />
              {tab.label}
            </button>
            <button aria-label={`${tab.label} bezárása`}>
              <CrossIcon size={10} fill="url(#gGrey)" stroke="#666" />
            </button>
          </div>
        ))}
      </div>
      <TabStrip />

      {/* Paging and search */}
      <div className="flex h-[32px] items-center pl-[6px]">
        <button aria-label="Törlés"><CrossIcon size={14} fill="url(#gGrey)" stroke="#555" /></button>
        <button aria-label="Frissítés" className="ml-[9px]"><RefreshIcon /></button>
        <button aria-label="Összegzés" className="ml-[8px] w-[13px] text-[18px] text-[#333]">Σ</button>
        <span className="ml-[15px] h-[12px] w-px bg-[#4a74b5]" />
        <button aria-label="Első oldal" className="ml-[16px]"><Chevron double /></button>
        <button aria-label="Előző oldal" className="ml-[11px]"><Chevron /></button>
        <span className="ml-[7px] text-[#333]">1</span>
        <button aria-label="Következő oldal" className="ml-[7px]"><Chevron flip /></button>
        <button aria-label="Utolsó oldal" className="ml-[11px]"><Chevron double flip /></button>
        <label className="ml-auto flex h-[28px] w-[27px] items-center border border-r-0 border-[#a5a8af] bg-white pl-px">
          <SearchIcon />
          <input aria-label="Keresés" className="min-w-0 flex-1 outline-none" />
        </label>
      </div>

      <VoucherTable />
      <div className="h-[24px] border-b border-[#9b9ea6]" />
      <div className="h-[9px] border-b border-[#9b9ea6]" />
      <div className="h-[113px]" />

      <ExpenseDialog />
    </div>
  );
}
